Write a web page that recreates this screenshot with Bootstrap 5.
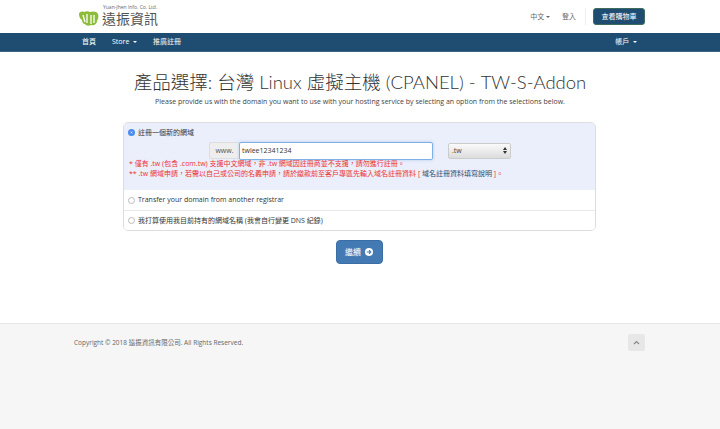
<!DOCTYPE html>
<html lang="zh-Hant">
<head>
<meta charset="utf-8">
<title>產品選擇</title>
<link href="https://cdn.jsdelivr.net/npm/bootstrap@5.3.0/dist/css/bootstrap.min.css" rel="stylesheet">
<style>
html,body{height:429px;overflow:hidden}
body{font-family:"Open Sans","Noto Sans CJK TC",sans-serif;font-size:7px;color:#333;background:#fff;line-height:1.4}
.shell{width:571px;margin-left:74px}
.topbar{height:33px}
.logo-wrap{margin-left:4px;gap:3px;width:90px;margin-top:-3px}
.logo-en{font-size:5px;line-height:6px;height:6px;color:#666;margin-left:1px;white-space:nowrap}
.logo-zh{font-size:14px;line-height:15px;height:15px;color:#555;font-weight:400;margin-top:1px;white-space:nowrap}
.toplink{font-size:7px;color:#666}
.topdiv{width:1px;height:17px;background:#eee;margin:0 7px 0 9px}
.cartbtn{background:#1f4d72;color:#fff;border:1px solid #3f6b5e;border-radius:3px;font-size:7px;width:52px;height:17px;padding:0;line-height:15px}
.mainbar{background:#1f4d72;height:19px;border-bottom:1px solid #3d6685;color:#fff;font-size:7px}
.mainbar .shell{padding:0 8px;height:18px}
.caret-mini{display:inline-block;border-top:2px solid currentColor;border-left:2px solid transparent;border-right:2px solid transparent;vertical-align:middle}
.pagetitle{font-family:"Lato","Noto Sans CJK TC",sans-serif;font-size:18.5px;line-height:24px;font-weight:300;color:#333;margin:18px 0 0;text-align:center}
.subtitle{font-size:7px;line-height:10px;color:#444;text-align:center;margin:3px 0 0}
.optpanel{width:473px;margin:15px 0 0 123px;border:1px solid #ddd;border-radius:5px;overflow:hidden}
.optpick{background:#ebeefb;height:67px;padding:5px 4px 0}
.optrow{height:20px;padding:0 4px;border-top:1px solid #e9e9e9;background:#fff}
.optrow.first{border-top:0}
.radio-dot{width:7px;height:7px;border-radius:50%;border:1px solid #bbb;background:#fff;flex:none;margin-right:3px}
.radio-dot.on{border:2px solid #4a8bee;background:#fff;box-shadow:inset 0 0 0 1px #4a8bee}
.optlabel{font-size:7px;color:#333}
.domainrow{margin:4px 0 0 81px}
.wwwtag{width:30px;height:17px;background:#eee;border:1px solid #ddd;border-right:0;font-size:7px;color:#555;display:flex;align-items:center;justify-content:center;border-radius:2px 0 0 2px}
.domaininput{width:194px;height:18px;border:1px solid #7fb0e6;border-radius:2px;padding:0 2px;font-size:7px;color:#333;box-shadow:0 0 3px #a9ccf2;background:#fff;line-height:16px}
.tldselect{width:63px;height:16px;margin-left:15px;border:1px solid #ccc;border-radius:2px;background:linear-gradient(#fafafa,#dcdcdc);font-size:7px;color:#444;padding:0 3px}
.warnline{color:#e33;font-size:7px;line-height:10px;padding-left:1px;white-space:nowrap}
.warnblock{margin-top:-1px}
.warnline a{color:#1f4d72;text-decoration:none}
.gobtn{background:#437ab3;border:1px solid #3a6ea5;color:#fff;border-radius:4px;font-size:8px;width:47px;height:24px;padding:0;gap:4px}
.gorow{margin-top:9px;padding-right:2px}
.footarea{position:absolute;left:0;right:0;top:323px;bottom:0;background:#f6f6f6;border-top:1px solid #e8e8e8}
.footrow{padding-top:10px}
.copytext{font-size:6.5px;color:#666;margin:0}
.backtop{width:17px;height:17px;background:#e7e7e7;border-radius:2px}
</style>
</head>
<body>
<header class="topbar">
  <div class="shell d-flex align-items-center justify-content-between h-100">
    <div class="logo-wrap d-flex align-items-end">
      <svg width="21" height="15" viewBox="0 0 21 15"><path d="M1 3c0-2 3-3 5-2 2-1 4-1 6 0 3-1 7-1 8 2 1 3 0 5-1 7 0 3-3 5-6 4-2 1-5 1-6-1-2 0-3-2-3-4-2-1-3-4-3-6z" fill="#8dbb3a"/><path d="M5 4l2 7M9 3v9M13 4v9M16 4v8" stroke="#fff" stroke-width="1.3" fill="none"/></svg>
      <div><div class="logo-en">Yuan-Jhen Info. Co. Ltd.</div><div class="logo-zh">遠振資訊</div></div>
    </div>
    <div class="d-flex align-items-center">
      <span class="toplink">中文 <span class="caret-mini"></span></span>
      <span class="toplink ms-2 ps-1">登入</span>
      <span class="topdiv"></span>
      <button class="btn cartbtn" type="button">查看購物車</button>
    </div>
  </div>
</header>
<nav class="mainbar">
  <div class="shell d-flex align-items-center justify-content-between">
    <div class="d-flex gap-3"><span>首頁</span><span>Store &nbsp;<span class="caret-mini"></span></span><span>推廣註冊</span></div>
    <div>帳戶 &nbsp;<span class="caret-mini"></span></div>
  </div>
</nav>
<main>
  <h1 class="pagetitle">產品選擇: 台灣 Linux 虛擬主機 (CPANEL) - TW-S-Addon</h1>
  <p class="subtitle">Please provide us with the domain you want to use with your hosting service by selecting an option from the selections below.</p>
  <form class="optpanel">
    <div class="optpick">
      <div class="d-flex align-items-center"><span class="radio-dot on"></span><span class="optlabel">註冊一個新的網域</span></div>
      <div class="domainrow d-flex align-items-center">
        <span class="wwwtag">www.</span>
        <div class="domaininput">twlee12341234</div>
        <div class="tldselect d-flex align-items-center justify-content-between"><span>.tw</span><svg width="4" height="7" viewBox="0 0 4 7"><path d="M2 0 4 3H0zM2 7 0 4h4z" fill="#333"/></svg></div>
      </div>
      <div class="warnblock">
        <div class="warnline">* 僅有 .tw (包含 .com.tw) 支援中文網域，非 .tw 網域因註冊商並不支援，請勿進行註冊。</div>
        <div class="warnline">** .tw 網域申請，若需以自己或公司的名義申請，請於繳款前至客戶專區先輸入域名註冊資料 [ <a href="#">域名註冊資料填寫說明</a> ]。</div>
      </div>
    </div>
    <div class="optrow first d-flex align-items-center"><span class="radio-dot"></span><span class="optlabel">Transfer your domain from another registrar</span></div>
    <div class="optrow d-flex align-items-center"><span class="radio-dot"></span><span class="optlabel">我打算使用我目前持有的網域名稱 (我會自行變更 DNS 紀錄)</span></div>
  </form>
  <div class="gorow d-flex justify-content-center">
    <button class="btn gobtn d-flex align-items-center justify-content-center" type="button">繼續
      <svg width="8" height="8" viewBox="0 0 8 8"><circle cx="4" cy="4" r="4" fill="#fff"/><path d="M1.8 4h4M4 2.2 5.8 4 4 5.8" stroke="#437ab3" stroke-width="1.1" fill="none"/></svg>
    </button>
  </div>
</main>
<footer class="footarea">
  <div class="shell footrow d-flex align-items-center justify-content-between">
    <p class="copytext">Copyright © 2018 遠振資訊有限公司. All Rights Reserved.</p>
    <span class="backtop d-flex align-items-center justify-content-center"><svg width="7" height="5" viewBox="0 0 7 5"><path d="M1 4 3.5 1.5 6 4" stroke="#888" stroke-width="1.2" fill="none"/></svg></span>
  </div>
</footer>
</body>
</html>
